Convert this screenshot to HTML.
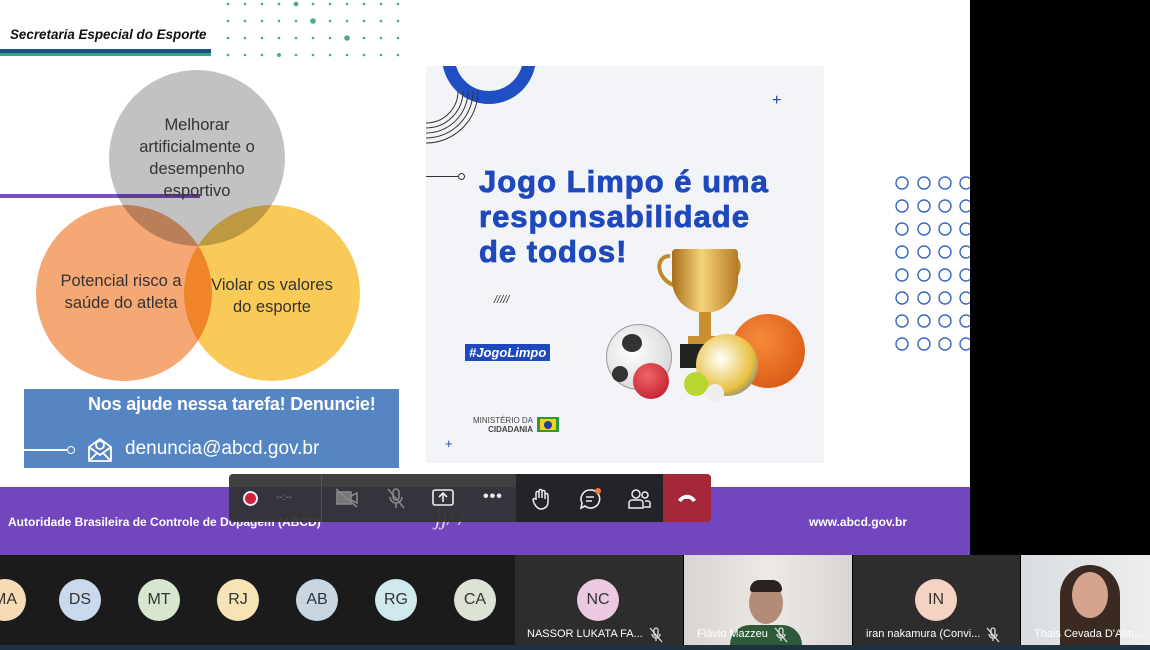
<!DOCTYPE html>
<html><head><meta charset="utf-8"><style>
*{margin:0;padding:0;box-sizing:border-box}
body{width:1150px;height:650px;overflow:hidden;background:#000;font-family:"Liberation Sans",sans-serif;position:relative}
.abs{position:absolute}
.slide{left:0;top:0;width:970px;height:555px;background:#fff;overflow:hidden}
.circ{border-radius:50%;position:absolute}
.ct{position:absolute;text-align:center;color:#333;font-size:16px;line-height:22px}
.av{position:absolute;width:42px;height:42px;border-radius:50%;top:579px;font-size:16px;line-height:42px;text-align:center;color:#333}
.name{position:absolute;top:628px;color:#fff;font-size:11px;white-space:nowrap}
.tb{position:absolute;top:474px;height:48px;}
.ic{position:absolute;top:488px}
.mute{position:absolute;top:627px}
</style></head><body>
<div class="abs slide">
  <div class="abs" style="left:10px;top:27px;font-size:13.4px;font-weight:bold;font-style:italic;color:#111">Secretaria Especial do Esporte</div>
  <div class="abs" style="left:0;top:49px;width:211px;height:4px;background:#1c4f87"></div>
  <div class="abs" style="left:0;top:53px;width:211px;height:3px;background:#35a87a"></div>
  <svg class="abs" style="left:222px;top:0" width="190" height="60" fill="#48ad80">
    <g>
    <circle cx="6" cy="4" r="1.3"/><circle cx="23" cy="4" r="1.3"/><circle cx="40" cy="4" r="1.3"/><circle cx="57" cy="4" r="1.3"/><circle cx="74" cy="4" r="2.3"/><circle cx="91" cy="4" r="1.3"/><circle cx="108" cy="4" r="1.3"/><circle cx="125" cy="4" r="1.3"/><circle cx="142" cy="4" r="1.3"/><circle cx="159" cy="4" r="1.3"/><circle cx="176" cy="4" r="1.3"/>
    <circle cx="6" cy="21" r="1.3"/><circle cx="23" cy="21" r="1.3"/><circle cx="40" cy="21" r="1.3"/><circle cx="57" cy="21" r="1.3"/><circle cx="74" cy="21" r="1.3"/><circle cx="91" cy="21" r="2.8"/><circle cx="108" cy="21" r="1.3"/><circle cx="125" cy="21" r="1.3"/><circle cx="142" cy="21" r="1.3"/><circle cx="159" cy="21" r="1.3"/><circle cx="176" cy="21" r="1.3"/>
    <circle cx="6" cy="38" r="1.3"/><circle cx="23" cy="38" r="1.3"/><circle cx="40" cy="38" r="1.3"/><circle cx="57" cy="38" r="1.3"/><circle cx="74" cy="38" r="1.3"/><circle cx="91" cy="38" r="1.3"/><circle cx="108" cy="38" r="1.3"/><circle cx="125" cy="38" r="2.8"/><circle cx="142" cy="38" r="1.3"/><circle cx="159" cy="38" r="1.3"/><circle cx="176" cy="38" r="1.3"/>
    <circle cx="6" cy="55" r="1.3"/><circle cx="23" cy="55" r="1.3"/><circle cx="40" cy="55" r="1.3"/><circle cx="57" cy="55" r="2"/><circle cx="74" cy="55" r="1.3"/><circle cx="91" cy="55" r="1.3"/><circle cx="108" cy="55" r="1.3"/><circle cx="125" cy="55" r="1.3"/><circle cx="142" cy="55" r="1.3"/><circle cx="159" cy="55" r="1.3"/><circle cx="176" cy="55" r="1.3"/>
    </g>
  </svg>
  <div class="abs" style="left:0;top:194px;width:200px;height:4px;background:#7a4fc0"></div>
  <div class="circ" style="left:36px;top:205px;width:176px;height:176px;background:#f4a26d;opacity:.95"></div>
  <div class="circ" style="left:184px;top:205px;width:176px;height:176px;background:#f9c545;opacity:.9;mix-blend-mode:multiply"></div>
  <div class="circ" style="left:109px;top:70px;width:176px;height:176px;background:#bdbdbd;opacity:.92;mix-blend-mode:multiply"></div>
  <div class="ct" style="left:109px;top:114px;width:176px;font-size:16.5px">Melhorar<br>artificialmente o<br>desempenho<br>esportivo</div>
  <div class="ct" style="left:44px;top:270px;width:154px;font-size:16.5px">Potencial risco a<br>saúde do atleta</div>
  <div class="ct" style="left:198px;top:274px;width:148px;font-size:16.5px">Violar os valores<br>do esporte</div>
  <div class="abs" style="left:24px;top:389px;width:375px;height:79px;background:#5685c4"></div>
  <div class="abs" style="left:88px;top:394px;color:#fff;font-size:18px;font-weight:bold;letter-spacing:-.2px">Nos ajude nessa tarefa! Denuncie!</div>
  <div class="abs" style="left:24px;top:449px;width:44px;height:1.5px;background:#fff"></div>
  <div class="abs" style="left:67px;top:446px;width:8px;height:8px;border:1.5px solid #fff;border-radius:50%"></div>
  <svg class="abs" style="left:87px;top:435px" width="26" height="28" fill="none" stroke="#fff" stroke-width="1.8"><path d="M2 12 L13 4 L24 12 V26 H2 Z M2 12 L13 20 L24 12 M2 26 L10 18 M24 26 L16 18"/><circle cx="13" cy="10" r="4"/></svg>
  <div class="abs" style="left:125px;top:438px;color:#fff;font-size:19px">denuncia@abcd.gov.br</div>

  <div class="abs" style="left:426px;top:66px;width:398px;height:397px;background:#f3f4f7;overflow:hidden">
    <div class="circ" style="left:16px;top:-56px;width:94px;height:94px;border:13px solid #1f4fc2"></div>
    <svg class="abs" style="left:0;top:15px" width="60" height="65" fill="none" stroke="#333" stroke-width="1"><path d="M0 62 A52 52 0 0 0 52 10 M0 57 A47 47 0 0 0 47 10 M0 52 A42 42 0 0 0 42 10 M0 47 A37 37 0 0 0 37 10 M0 42 A32 32 0 0 0 32 10"/></svg>
    <div class="abs" style="left:0;top:110px;width:32px;height:1px;background:#333"></div>
    <div class="abs" style="left:32px;top:107px;width:7px;height:7px;border:1px solid #333;border-radius:50%"></div>
    <div class="abs" style="left:346px;top:26px;color:#2244aa;font-size:16px">+</div>
    <div class="abs" style="left:19px;top:370px;color:#2244aa;font-size:13px">+</div>
    <div class="abs" style="left:53px;top:98px;color:#1e49bd;font-size:31px;font-weight:bold;line-height:35px;letter-spacing:1px;-webkit-text-stroke:.8px #1e49bd">Jogo Limpo é uma<br>responsabilidade<br>de todos!</div>
    <div class="abs" style="left:68px;top:228px;color:#333;font-size:11px;font-style:italic;letter-spacing:0px">/////</div>
    <div class="abs" style="left:39px;top:278px;background:#1e49bd;color:#fff;font-size:13px;font-weight:bold;font-style:italic;padding:1px 4px">#JogoLimpo</div>
    <div class="abs" style="left:47px;top:350px;font-size:8px;color:#444;text-align:right;line-height:9px">MINISTÉRIO DA<br><b>CIDADANIA</b></div>
    <div class="abs" style="left:111px;top:351px;width:22px;height:15px;background:#2a9a3c"><div style="position:absolute;left:3px;top:2px;width:16px;height:11px;background:#f5d020"></div><div style="position:absolute;left:7px;top:3.5px;width:8px;height:8px;border-radius:50%;background:#1b3f9a"></div></div>
    <div class="abs" style="left:370px;top:350px;width:0;height:0;box-shadow:0 0 0 0"></div>
    <svg class="abs" style="left:228px;top:180px" width="90" height="100" fill="none" stroke="#c08a2a" stroke-width="4"><path d="M16 10 C0 10 2 34 22 40 M74 10 C90 10 88 34 68 40"/></svg>
    <div class="abs" style="left:246px;top:183px;width:66px;height:64px;background:linear-gradient(90deg,#a86d1a,#f6d37a 45%,#b47a24);border-radius:4px 4px 34px 34px"></div>
    <div class="abs" style="left:273px;top:246px;width:12px;height:28px;background:#c8902f"></div>
    <div class="abs" style="left:262px;top:270px;width:34px;height:8px;background:#c8902f"></div>
    <div class="abs" style="left:254px;top:278px;width:52px;height:24px;background:#222"></div>
    <div class="circ" style="left:180px;top:258px;width:66px;height:66px;background:radial-gradient(circle at 40% 40%,#fff,#ccc);border:1px solid #999"></div>
    <div class="circ" style="left:196px;top:268px;width:20px;height:18px;background:#333"></div>
    <div class="circ" style="left:186px;top:300px;width:16px;height:16px;background:#333"></div>
    <div class="circ" style="left:305px;top:248px;width:74px;height:74px;background:radial-gradient(circle at 40% 35%,#f88a3a,#d14e0e)"></div>
    <div class="circ" style="left:270px;top:268px;width:62px;height:62px;background:radial-gradient(circle at 40% 40%,#fff,#e8c040 60%,#2a55a8)"></div>
    <div class="circ" style="left:207px;top:297px;width:36px;height:36px;background:radial-gradient(circle at 40% 35%,#e66,#b12)"></div>
    <div class="circ" style="left:258px;top:306px;width:24px;height:24px;background:#b8d630"></div>
    <div class="circ" style="left:280px;top:318px;width:18px;height:18px;background:#eee"></div>
  </div>
  <svg class="abs" style="left:895px;top:175px" width="75" height="180" fill="none" stroke="#3566c3" stroke-width="1.4">
    <g id="r"><circle cx="7" cy="8" r="6"/><circle cx="29" cy="8" r="6"/><circle cx="50" cy="8" r="6"/><circle cx="71" cy="8" r="6"/></g>
    <use href="#r" y="23"/><use href="#r" y="46"/><use href="#r" y="69"/><use href="#r" y="92"/><use href="#r" y="115"/><use href="#r" y="138"/><use href="#r" y="161"/>
  </svg>
  <div class="abs" style="left:0;top:487px;width:970px;height:68px;background:#7346c0"></div>
  <div class="abs" style="left:8px;top:515px;color:#fff;font-size:12px;font-weight:bold">Autoridade Brasileira de Controle de Dopagem (ABCD)</div>
  <div class="abs" style="left:809px;top:515px;color:#fff;font-size:12px;font-weight:bold">www.abcd.gov.br</div>
  <div class="abs" style="left:435px;top:505px;color:#ddd;font-size:22px;font-style:italic;font-family:'Liberation Serif',serif">jj/ /</div>
</div>

<div class="tb" style="left:229px;width:434px;background:rgba(50,50,50,.93);border-radius:4px 0 0 4px"></div>
<div class="tb" style="left:321px;width:1px;background:#555"></div>
<div class="tb" style="left:516px;width:147px;background:rgba(35,35,40,.95)"></div>
<div class="tb" style="left:663px;width:48px;background:#a4283a;border-radius:0 4px 4px 0"></div>
<div class="circ" style="left:243px;top:491px;width:15px;height:15px;border:2px solid #eee;background:#d01e3e"></div>
<div class="abs" style="left:276px;top:492px;color:#888;font-size:10px">--:--</div>
<svg class="ic" style="left:335px" width="24" height="20" fill="none" stroke="#888" stroke-width="1.6"><rect x="2" y="4" width="14" height="12" fill="#777"/><path d="M16 8 L22 5 V15 L16 12 M1 1 L22 19"/></svg>
<svg class="ic" style="left:386px" width="20" height="22" fill="none" stroke="#888" stroke-width="1.6"><rect x="7" y="1" width="6" height="11" rx="3"/><path d="M4 9 A6 6 0 0 0 16 9 M10 15 V20 M2 1 L18 20"/></svg>
<svg class="ic" style="left:432px" width="22" height="20" fill="none" stroke="#eee" stroke-width="1.6"><rect x="1" y="2" width="20" height="15" rx="2"/><path d="M11 14 V6 M7 9 L11 5 L15 9"/></svg>
<div class="abs" style="left:483px;top:488px;color:#eee;font-size:16px;font-weight:bold;letter-spacing:1px">•••</div>
<svg class="ic" style="left:531px" width="20" height="22" fill="none" stroke="#eee" stroke-width="1.5"><path d="M5 12 V5 a1.5 1.5 0 0 1 3 0 V10 V3 a1.5 1.5 0 0 1 3 0 V10 V4 a1.5 1.5 0 0 1 3 0 V11 V7 a1.5 1.5 0 0 1 3 0 V14 C17 19 13 21 10 21 C7 21 5 19 3 15 L2 12 a1.5 1.5 0 0 1 3 0"/></svg>
<svg class="ic" style="left:579px" width="24" height="22" fill="none" stroke="#eee" stroke-width="1.6"><path d="M11 2 a9 9 0 1 1 -5 16 L2 20 L3 15 A9 9 0 0 1 11 2 M7 9 H15 M7 13 H13"/><circle cx="19" cy="3" r="3" fill="#f47b3a" stroke="none"/></svg>
<svg class="ic" style="left:628px" width="24" height="22" fill="none" stroke="#eee" stroke-width="1.5"><circle cx="8" cy="6" r="4"/><circle cx="17" cy="7" r="3"/><path d="M1 20 V15 a3 3 0 0 1 3 -3 H12 a3 3 0 0 1 3 3 V20 Z M17 13 H20 a2 2 0 0 1 2 2 V19 H16"/></svg>
<svg class="abs" style="left:677px;top:492px" width="20" height="12"><path d="M1 8 C6 1 14 1 19 8 L16 10 L13 7 H7 L4 10 Z" fill="#fff"/></svg>

<div class="abs" style="left:0;top:555px;width:515px;height:90px;background:#1b1b1b"></div>
<div class="av" style="left:-16px;background:#f6dbb4">MA</div>
<div class="av" style="left:59px;background:#c9d9ee">DS</div>
<div class="av" style="left:138px;background:#d9e6cf">MT</div>
<div class="av" style="left:217px;background:#f8e3b4">RJ</div>
<div class="av" style="left:296px;background:#c8d6e2">AB</div>
<div class="av" style="left:375px;background:#cfe9ec">RG</div>
<div class="av" style="left:454px;background:#dce3d5">CA</div>
<div class="abs" style="left:515px;top:555px;width:168px;height:90px;background:#2d2d2d"></div>
<div class="av" style="left:577px;background:#ecc9e0">NC</div>
<div class="name" style="left:527px">NASSOR LUKATA FA...</div>
<div class="abs" style="left:684px;top:555px;width:168px;height:90px;background:linear-gradient(90deg,#d8d4cf,#ece9e6,#d9d6d2)"></div>
<div class="circ" style="left:749px;top:582px;width:34px;height:42px;background:#b48b76"></div>
<div class="abs" style="left:750px;top:580px;width:32px;height:12px;background:#2a221e;border-radius:14px 14px 4px 4px"></div>
<div class="abs" style="left:730px;top:625px;width:72px;height:20px;background:#2e5a3a;border-radius:20px 20px 0 0"></div>
<div class="name" style="left:697px">Flávio Mazzeu</div>
<div class="abs" style="left:853px;top:555px;width:167px;height:90px;background:#2d2d2d"></div>
<div class="av" style="left:915px;background:#f6d2c2">IN</div>
<div class="name" style="left:866px">iran nakamura (Convi...</div>
<div class="abs" style="left:1021px;top:555px;width:129px;height:90px;background:linear-gradient(90deg,#d9dcdf,#eceeef)"></div>
<div class="abs" style="left:1060px;top:565px;width:60px;height:80px;background:#3a2a22;border-radius:30px 30px 0 0"></div>
<div class="circ" style="left:1072px;top:572px;width:36px;height:46px;background:#d6a48e"></div>
<div class="name" style="left:1034px">Thais Cevada D'Alm...</div>
<svg class="mute" style="left:649px" width="14" height="16" fill="none" stroke="#ddd" stroke-width="1.3"><rect x="5" y="1" width="4" height="8" rx="2"/><path d="M3 7 A4 4 0 0 0 11 7 M7 11 V14 M1 1 L13 15"/></svg>
<svg class="mute" style="left:774px" width="14" height="16" fill="none" stroke="#ddd" stroke-width="1.3"><rect x="5" y="1" width="4" height="8" rx="2"/><path d="M3 7 A4 4 0 0 0 11 7 M7 11 V14 M1 1 L13 15"/></svg>
<svg class="mute" style="left:986px" width="14" height="16" fill="none" stroke="#ddd" stroke-width="1.3"><rect x="5" y="1" width="4" height="8" rx="2"/><path d="M3 7 A4 4 0 0 0 11 7 M7 11 V14 M1 1 L13 15"/></svg>
<div class="abs" style="left:0;top:645px;width:1150px;height:5px;background:#1e3340"></div>
</body></html>
